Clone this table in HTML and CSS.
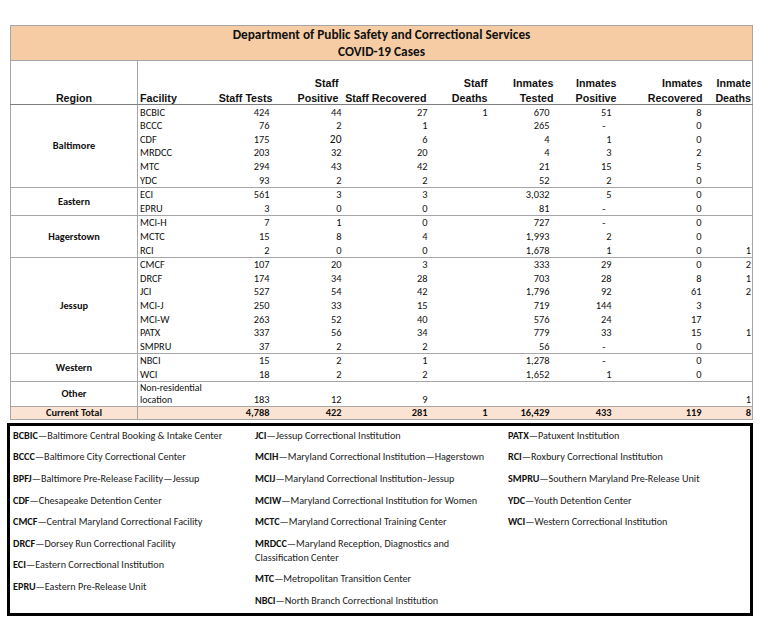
FILE: index.html
```html
<!DOCTYPE html>
<html>
<head>
<meta charset="utf-8">
<link rel="stylesheet" href="styles.css">
</head>
<body>
<table class="cases">
  <colgroup>
    <col class="w-region"><col class="w-fac"><col class="w-st"><col class="w-sp"><col class="w-sr"><col class="w-sd"><col class="w-it"><col class="w-ip"><col class="w-ir"><col class="w-id">
  </colgroup>
  <thead>
    <tr class="title"><th colspan="10">Department of Public Safety and Correctional Services<br>COVID-19 Cases</th></tr>
    <tr class="heads">
      <th class="h-region"><div class="hl">Region</div></th>
      <th class="h-fac"><div class="hl">Facility</div></th>
      <th class="h-num"><div class="hl">Staff Tests</div></th>
      <th class="h-num"><div class="hl">Staff<br>Positive</div></th>
      <th class="h-num"><div class="hl">Staff Recovered</div></th>
      <th class="h-num"><div class="hl">Staff<br>Deaths</div></th>
      <th class="h-num"><div class="hl">Inmates<br>Tested</div></th>
      <th class="h-num"><div class="hl">Inmates<br>Positive</div></th>
      <th class="h-num"><div class="hl">Inmates<br>Recovered</div></th>
      <th class="h-num"><div class="hl">Inmate<br>Deaths</div></th>
    </tr>
  </thead>
  <tbody>
    <tr class="first"><td class="region" rowspan="6">Baltimore</td><td>BCBIC</td><td>424</td><td>44</td><td>27</td><td>1</td><td>670</td><td>51</td><td>8</td><td></td></tr>
    <tr><td>BCCC</td><td>76</td><td>2</td><td>1</td><td></td><td>265</td><td><span class="dash">-</span></td><td>0</td><td></td></tr>
    <tr><td>CDF</td><td>175</td><td class="big">20</td><td>6</td><td></td><td>4</td><td>1</td><td>0</td><td></td></tr>
    <tr><td>MRDCC</td><td>203</td><td>32</td><td>20</td><td></td><td>4</td><td>3</td><td>2</td><td></td></tr>
    <tr><td>MTC</td><td>294</td><td>43</td><td>42</td><td></td><td>21</td><td>15</td><td>5</td><td></td></tr>
    <tr><td>YDC</td><td>93</td><td>2</td><td>2</td><td></td><td>52</td><td>2</td><td>0</td><td></td></tr>

    <tr class="first"><td class="region" rowspan="2">Eastern</td><td>ECI</td><td>561</td><td>3</td><td>3</td><td></td><td>3,032</td><td>5</td><td>0</td><td></td></tr>
    <tr><td>EPRU</td><td>3</td><td>0</td><td>0</td><td></td><td>81</td><td><span class="dash">-</span></td><td>0</td><td></td></tr>

    <tr class="first"><td class="region" rowspan="3">Hagerstown</td><td>MCI-H</td><td>7</td><td>1</td><td>0</td><td></td><td>727</td><td><span class="dash">-</span></td><td>0</td><td></td></tr>
    <tr><td>MCTC</td><td>15</td><td>8</td><td>4</td><td></td><td>1,993</td><td>2</td><td>0</td><td></td></tr>
    <tr><td>RCI</td><td>2</td><td>0</td><td>0</td><td></td><td>1,678</td><td>1</td><td>0</td><td>1</td></tr>

    <tr class="first"><td class="region" rowspan="7">Jessup</td><td>CMCF</td><td>107</td><td>20</td><td>3</td><td></td><td>333</td><td>29</td><td>0</td><td>2</td></tr>
    <tr><td>DRCF</td><td>174</td><td>34</td><td>28</td><td></td><td>703</td><td>28</td><td>8</td><td>1</td></tr>
    <tr><td>JCI</td><td>527</td><td>54</td><td>42</td><td></td><td>1,796</td><td>92</td><td>61</td><td>2</td></tr>
    <tr><td>MCI-J</td><td>250</td><td>33</td><td>15</td><td></td><td>719</td><td>144</td><td>3</td><td></td></tr>
    <tr><td>MCI-W</td><td>263</td><td>52</td><td>40</td><td></td><td>576</td><td>24</td><td>17</td><td></td></tr>
    <tr><td>PATX</td><td>337</td><td>56</td><td>34</td><td></td><td>779</td><td>33</td><td>15</td><td>1</td></tr>
    <tr><td>SMPRU</td><td>37</td><td>2</td><td>2</td><td></td><td>56</td><td><span class="dash">-</span></td><td>0</td><td></td></tr>

    <tr class="first"><td class="region" rowspan="2">Western</td><td>NBCI</td><td>15</td><td>2</td><td>1</td><td></td><td>1,278</td><td><span class="dash">-</span></td><td>0</td><td></td></tr>
    <tr><td>WCI</td><td>18</td><td>2</td><td>2</td><td></td><td>1,652</td><td>1</td><td>0</td><td></td></tr>

    <tr class="first other"><td class="region">Other</td><td class="wrap">Non-residential<br>location</td><td>183</td><td>12</td><td>9</td><td></td><td></td><td></td><td></td><td>1</td></tr>
  </tbody>
  <tfoot>
    <tr class="total"><td class="region">Current Total</td><td></td><td>4,788</td><td>422</td><td>281</td><td>1</td><td>16,429</td><td>433</td><td>119</td><td>8</td></tr>
  </tfoot>
</table>

<div class="legend">
  <div class="legend-col">
    <p><b>BCBIC</b>—Baltimore Central Booking &amp; Intake Center</p>
    <p><b>BCCC</b>—Baltimore City Correctional Center</p>
    <p><b>BPFJ</b>—Baltimore Pre-Release Facility—Jessup</p>
    <p><b>CDF</b>—Chesapeake Detention Center</p>
    <p><b>CMCF</b>—Central Maryland Correctional Facility</p>
    <p><b>DRCF</b>—Dorsey Run Correctional Facility</p>
    <p><b>ECI</b>—Eastern Correctional Institution</p>
    <p><b>EPRU</b>—Eastern Pre-Release Unit</p>
  </div>
  <div class="legend-col">
    <p><b>JCI</b>—Jessup Correctional Institution</p>
    <p><b>MCIH</b>—Maryland Correctional Institution—Hagerstown</p>
    <p><b>MCIJ</b>—Maryland Correctional Institution–Jessup</p>
    <p><b>MCIW</b>—Maryland Correctional Institution for Women</p>
    <p><b>MCTC</b>—Maryland Correctional Training Center</p>
    <p><b>MRDCC</b>—Maryland Reception, Diagnostics and<br>Classification Center</p>
    <p><b>MTC</b>—Metropolitan Transition Center</p>
    <p><b>NBCI</b>—North Branch Correctional Institution</p>
  </div>
  <div class="legend-col">
    <p><b>PATX</b>—Patuxent Institution</p>
    <p><b>RCI</b>—Roxbury Correctional Institution</p>
    <p><b>SMPRU</b>—Southern Maryland Pre-Release Unit</p>
    <p><b>YDC</b>—Youth Detention Center</p>
    <p><b>WCI</b>—Western Correctional Institution</p>
  </div>
</div>
</body>
</html>
```

FILE: styles.css
```css
html, body {
  margin: 0;
  padding: 0;
  background: #ffffff;
}

body {
  font-family: Carlito, Lato, "Liberation Sans", sans-serif;
  color: #111;
}

.cases {
  margin: 25px 0 0 10px;
  width: 742px;
  border-collapse: collapse;
  table-layout: fixed;
  font-size: 10.4px;
}

.w-region { width: 127px; }
.w-fac { width: 68px; }
.w-st { width: 68px; }
.w-sp { width: 69px; }
.w-sr { width: 87px; }
.w-sd { width: 60px; }
.w-it { width: 65px; }
.w-ip { width: 63px; }
.w-ir { width: 86px; }
.w-id { width: 49px; }

.cases th,
.cases td {
  padding: 0;
  white-space: nowrap;
}

.title th {
  background: #f6cca5;
  border: 1px solid #a6a6a6;
  font-family: Carlito, Lato, sans-serif;
  font-weight: 700;
  font-size: 13.3px;
  line-height: 17px;
  height: 33px;
  padding: 0;
  color: #111;
  text-align: center;
}

.heads th {
  height: 43px;
  vertical-align: bottom;
  font-family: "Liberation Sans", Arial, sans-serif;
  font-weight: 700;
  font-size: 10.7px;
  line-height: 15px;
  padding-bottom: 0;
  border-bottom: 1px solid #7f7f7f;
  color: #111;
}

.hl {
  margin-bottom: -2px;
}

.heads th:first-child { border-left: 1px solid #a6a6a6; }
.heads th:last-child { border-right: 1px solid #a6a6a6; }

.h-region {
  text-align: center;
  border-right: 1px solid #a6a6a6;
}

.h-fac {
  text-align: left;
  padding-left: 2px !important;
}

.h-num { text-align: right; }

.heads th:nth-child(3) { padding-right: 1px; }
.heads th:nth-child(4) { padding-right: 4px; }
.heads th:nth-child(5) { padding-right: 3px; }
.heads th:nth-child(6) { padding-right: 2px; }
.heads th:nth-child(7) { padding-right: 1px; }
.heads th:nth-child(8) { padding-right: 1px; }
.heads th:nth-child(9) { padding-right: 1px; }
.heads th:nth-child(10) { padding-right: 1px; }

tbody td {
  height: 13.6px;
  line-height: 13px;
  text-align: right;
  vertical-align: bottom;
}

tbody tr td:last-child { border-right: 1px solid #a6a6a6; }

tbody tr.first td { border-top: 1px solid #a6a6a6; }

td.region {
  text-align: center;
  vertical-align: middle;
  font-weight: 700;
  border-left: 1px solid #a6a6a6;
  border-right: 1px solid #a6a6a6;
}

/* facility name column */
tbody tr.first td:nth-child(2),
tbody tr:not(.first) td:nth-child(1) {
  text-align: left;
  padding-left: 2px;
}

/* numeric column right paddings: data */
tbody tr.first td:nth-child(3), tbody tr:not(.first) td:nth-child(2) { padding-right: 4px; }
tbody tr.first td:nth-child(4), tbody tr:not(.first) td:nth-child(3) { padding-right: 1px; }
tbody tr.first td:nth-child(5), tbody tr:not(.first) td:nth-child(4) { padding-right: 2px; }
tbody tr.first td:nth-child(6), tbody tr:not(.first) td:nth-child(5) { padding-right: 2px; }
tbody tr.first td:nth-child(7), tbody tr:not(.first) td:nth-child(6) { padding-right: 5px; }
tbody tr.first td:nth-child(8), tbody tr:not(.first) td:nth-child(7) { padding-right: 6px; }
tbody tr.first td:nth-child(9), tbody tr:not(.first) td:nth-child(8) { padding-right: 2px; }
tbody tr.first td:nth-child(10), tbody tr:not(.first) td:nth-child(9) { padding-right: 1px; }

.dash {
  display: inline-block;
  padding-right: 6px;
}

.big { font-size: 11.5px; }

tr.other td {
  height: 24px;
}

tr.other td.wrap {
  font-size: 9.9px;
  line-height: 12px;
  white-space: normal;
  vertical-align: bottom;
}

.total td {
  background: #fbe3d4;
  font-weight: 700;
  height: 12px;
  line-height: 12px;
  text-align: right;
  border-top: 1px solid #a6a6a6;
  border-bottom: 1px solid #a6a6a6;
}

.total td:first-child {
  text-align: center;
  border-left: 1px solid #a6a6a6;
  border-right: 1px solid #a6a6a6;
}

.total td:last-child { border-right: 1px solid #a6a6a6; padding-right: 1px; }
.total td:nth-child(3) { padding-right: 4px; }
.total td:nth-child(4) { padding-right: 1px; }
.total td:nth-child(5) { padding-right: 2px; }
.total td:nth-child(6) { padding-right: 2px; }
.total td:nth-child(7) { padding-right: 5px; }
.total td:nth-child(8) { padding-right: 6px; }
.total td:nth-child(9) { padding-right: 2px; }

.legend {
  box-sizing: border-box;
  margin: 3px 0 0 7px;
  width: 746px;
  height: 193px;
  border: 3px solid #000;
  padding: 3px 0 0 3px;
  display: grid;
  grid-template-columns: 242px 253px 1fr;
  font-size: 10.2px;
  color: #222;
}

.legend p {
  margin: 0 0 7.6px;
  line-height: 14px;
  white-space: nowrap;
}

.legend b {
  font-weight: 700;
  color: #111;
}
```
